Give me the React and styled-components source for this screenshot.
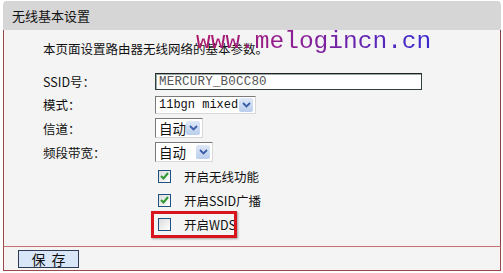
import React, { useState } from "react";
import styled, { createGlobalStyle } from "styled-components";

const GlobalStyle = createGlobalStyle`
  html, body {
    margin: 0;
    padding: 0;
    background: #ffffff;
  }
  body {
    font-family: "Noto Sans CJK SC", "DejaVu Sans", sans-serif;
    font-size: 12px;
    color: #000;
  }
`;

const StyledPage = styled.div`
  width: 503px;
  height: 273px;
  box-sizing: border-box;
  padding: 1px 2px 2px 3px;
  background: #fff;
`;

const StyledPanel = styled.div`
  display: flex;
  flex-direction: column;
  height: 100%;
`;

const StyledTitle = styled.div`
  display: flex;
  align-items: center;
  height: 29px;
  padding-left: 9px;
  background: #d6d6d6;
  border-radius: 4px 4px 0 0;
  font-size: 13px;
  color: #111;
`;

const StyledBody = styled.div`
  position: relative;
  display: flex;
  flex-direction: column;
  flex: 1;
  background: #f4f4f4;
  border-left: 1px solid #9a4848;
  border-right: 1px solid #8a4040;
  padding: 10px 0 0 39px;
`;

const StyledIntro = styled.div`
  height: 18px;
  line-height: 18px;
  font-size: 12.5px;
  color: #111;
  margin-bottom: 12px;
`;

const StyledWatermark = styled.div`
  position: absolute;
  left: 192px;
  top: -2px;
  font-family: "Liberation Mono", "Courier New", monospace;
  font-size: 24.5px;
  line-height: 28px;
  white-space: nowrap;
  background: linear-gradient(90deg, #b01a6a 0%, #8a1f96 45%, #3a2bd0 100%);
  -webkit-background-clip: text;
  background-clip: text;
  color: transparent;
`;

const StyledRow = styled.div`
  position: relative;
  display: grid;
  grid-template-columns: 112px 1fr;
  align-items: center;
  height: ${(p) => p.h || 23}px;
`;

const StyledLabel = styled.div`
  font-size: 12.5px;
  color: #111;
  white-space: nowrap;
`;

const StyledTextInput = styled.div`
  width: 262px;
  height: 15px;
  border: 1px solid #30403a;
  border-top-color: #222;
  background: #fff;
  box-shadow: inset 1px 1px 0 #9aa;
  font-family: "Liberation Mono", "Courier New", monospace;
  font-size: 12.5px;
  line-height: 16px;
  padding-left: 3px;
  color: #555;
  letter-spacing: 0.2px;
  white-space: nowrap;
`;

const StyledSelect = styled.div`
  display: flex;
  align-items: center;
  justify-content: space-between;
  width: ${(p) => p.w}px;
  height: ${(p) => p.hh || 18}px;
  box-sizing: border-box;
  border-left: 1px solid #7a7a7a;
  border-top: 1px solid #7a7a7a;
  border-right: 1px solid #d8d8d8;
  border-bottom: 1px solid #d8d8d8;
  background: #fff;
  padding-left: 3px;
  padding-right: 2px;
  white-space: nowrap;
  font-family: ${(p) =>
    p.mono
      ? `"Liberation Mono", "Courier New", monospace`
      : `"Noto Sans CJK SC", sans-serif`};
  font-size: ${(p) => (p.mono ? 12 : 13.5)}px;
  color: #111;
`;

const StyledArrow = styled.div`
  display: flex;
  flex: none;
  align-items: center;
  justify-content: center;
  width: 14px;
  height: 14px;
  background: linear-gradient(#dfe9f7, #b9cdec);
  border-radius: 2px;
`;

const StyledCheckRow = styled.div`
  position: relative;
  display: flex;
  align-items: center;
  gap: 13px;
  height: 24px;
  margin-left: 115px;
  font-size: 12.5px;
  color: #111;
  white-space: nowrap;
`;

const StyledBox = styled.div`
  display: flex;
  align-items: center;
  justify-content: center;
  width: 11px;
  height: 11px;
  border: 1px solid #1d5283;
  background: linear-gradient(135deg, #dcdcdc, #ffffff);
`;

const StyledHighlight = styled.div`
  position: absolute;
  left: -7px;
  top: -1px;
  width: 80px;
  height: 21px;
  border: 3px solid #d8141c;
  box-shadow: 1px 1px 2px rgba(0, 0, 0, 0.35);
`;

const StyledFooter = styled.div`
  display: flex;
  align-items: center;
  height: 23px;
  background: #f4f4f4;
  border: 1px solid #9a4848;
  border-top-color: #c87070;
  padding-left: 14px;
`;

const StyledButton = styled.button`
  width: 61px;
  height: 18px;
  padding: 0;
  border: 1px solid #2e3a52;
  background: #d8e6f7;
  font-family: "Noto Sans CJK SC", sans-serif;
  font-size: 14px;
  line-height: 16px;
  letter-spacing: 6px;
  text-indent: 6px;
  color: #111;
`;

const ArrowIcon = () => (
  <StyledArrow>
    <svg width="9" height="6" viewBox="0 0 9 6">
      <path d="M1 1 L4.5 4.5 L8 1" fill="none" stroke="#3a5fa8" strokeWidth="1.8" />
    </svg>
  </StyledArrow>
);

const Checkbox = ({ checked }) => (
  <StyledBox>
    {checked && (
      <svg width="9" height="8" viewBox="0 0 9 8">
        <path d="M1 4 L3.5 6.5 L8 1" fill="none" stroke="#2e9a2e" strokeWidth="2" />
      </svg>
    )}
  </StyledBox>
);

const App = () => {
  const [options] = useState([
    { label: "开启无线功能", checked: true },
    { label: "开启SSID广播", checked: true },
    { label: "开启WDS", checked: false, marked: true },
  ]);

  return (
    <>
      <GlobalStyle />
      <StyledPage>
        <StyledPanel>
          <StyledTitle>无线基本设置</StyledTitle>
          <StyledBody>
            <StyledWatermark>www.melogincn.cn</StyledWatermark>
            <StyledIntro>本页面设置路由器无线网络的基本参数。</StyledIntro>
            <StyledRow>
              <StyledLabel>SSID号：</StyledLabel>
              <StyledTextInput>MERCURY_B0CC80</StyledTextInput>
            </StyledRow>
            <StyledRow>
              <StyledLabel>模式：</StyledLabel>
              <StyledSelect w={101} mono>
                11bgn mixed
                <ArrowIcon />
              </StyledSelect>
            </StyledRow>
            <StyledRow h={24}>
              <StyledLabel>信道：</StyledLabel>
              <StyledSelect w={48} hh={20}>
                自动
                <ArrowIcon />
              </StyledSelect>
            </StyledRow>
            <StyledRow h={24}>
              <StyledLabel>频段带宽：</StyledLabel>
              <StyledSelect w={58} hh={20}>
                自动
                <ArrowIcon />
              </StyledSelect>
            </StyledRow>
            {options.map((o) => (
              <StyledCheckRow key={o.label}>
                <Checkbox checked={o.checked} />
                {o.label}
                {o.marked && <StyledHighlight />}
              </StyledCheckRow>
            ))}
          </StyledBody>
          <StyledFooter>
            <StyledButton>保存</StyledButton>
          </StyledFooter>
        </StyledPanel>
      </StyledPage>
    </>
  );
};

export default App;
